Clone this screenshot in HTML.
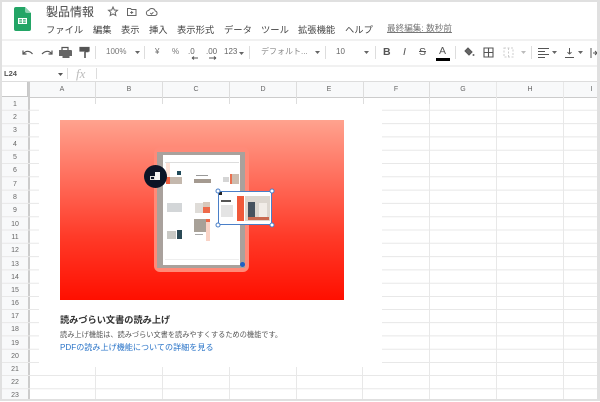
<!DOCTYPE html>
<html lang="ja">
<head>
<meta charset="utf-8">
<title>製品情報</title>
<style>
html,body{margin:0;padding:0;background:#fff}
body{width:600px;height:401px;overflow:hidden;position:relative;font-family:"Liberation Sans","Noto Sans CJK JP",sans-serif;color:#444}
.a{position:absolute;white-space:nowrap}
svg.a{overflow:visible}
#wrap{position:absolute;left:0;top:0;width:600px;height:401px;filter:blur(.35px)}
.m{top:23px;font-size:9.3px;line-height:14px;color:#444}
.t{font-size:8px;line-height:10px;color:#666;top:47px}
.h{top:85px;font-size:7px;line-height:10px;color:#666;width:20px;text-align:center}
.r{left:2px;width:26px;text-align:center;font-size:7px;line-height:13px;color:#666}
.sep{position:absolute;width:1px;height:13px;top:46px;background:#ddd}
.b{position:absolute}
</style>
</head>
<body>
<div id="wrap">
<!-- logo -->
<svg class="a" style="left:14px;top:7px" width="17" height="24" viewBox="0 0 17 24">
<path d="M2 0H11L17 6V22a2 2 0 0 1-2 2H2a2 2 0 0 1-2-2V2a2 2 0 0 1 2-2z" fill="#23a566"/>
<path d="M11 0L17 6H13a2 2 0 0 1-2-2z" fill="#8ed1b1"/>
<path d="M4 11H13V17H4z" fill="#fff"/>
<path d="M5.200 12.200H8V13.500H5.200zM9 12.200H11.800V13.500H9zM5.200 14.500H8V15.800H5.200zM9 14.500H11.800V15.800H9z" fill="#23a566"/>
</svg>
<div class="a" style="left:46px;top:3px;font-size:12px;line-height:18px;color:#444">製品情報</div>
<svg class="a" style="left:107px;top:5px" width="54" height="14" viewBox="0 0 54 14" fill="none" stroke="#666" stroke-width="1">
<path d="M6 2l1.300 3 3.200.3-2.400 2.100.7 3.100L6 8.900l-2.800 1.600.7-3.100L1.500 5.300 4.700 5z"/>
<path d="M20.500 3.500h3l1 1h4.500v6h-8.500z"/><path d="M24.700 6v3M23.200 7.500h3"/>
<path d="M42 10.500a2.500 2.500 0 0 1-.3-5 3.500 3.500 0 0 1 6.500.5 2.300 2.300 0 0 1 0 4.500z"/><path d="M43.300 8l1.200 1.200 1.900-2"/>
</svg>
<div class="a m" style="left:46px">ファイル</div>
<div class="a m" style="left:93px">編集</div>
<div class="a m" style="left:121px">表示</div>
<div class="a m" style="left:149px">挿入</div>
<div class="a m" style="left:177px">表示形式</div>
<div class="a m" style="left:224px">データ</div>
<div class="a m" style="left:261px">ツール</div>
<div class="a m" style="left:298px">拡張機能</div>
<div class="a m" style="left:345px">ヘルプ</div>
<div class="a" style="left:387px;top:22px;font-size:8.600px;line-height:13px;color:#777;text-decoration:underline">最終編集: 数秒前</div>

<!-- toolbar bands -->
<div class="a" style="left:2px;top:39px;width:595px;height:2px;background:#f1f1f1"></div>
<div class="a" style="left:2px;top:65px;width:595px;height:2px;background:#f1f1f1"></div>
<div class="a" style="left:2px;top:81px;width:595px;height:1px;background:#ddd"></div>

<!-- toolbar icons left -->
<svg class="a" style="left:20px;top:45px" width="72" height="15" viewBox="0 0 72 15" fill="none" stroke="#555" stroke-width="1.200">
<path d="M3 5.500v3.500h3.500M3.500 8.500C6 5.500 9.500 5.500 12.500 9"/>
<path d="M32 5.500v3.500h-3.500M31.500 8.500C29 5.500 25.500 5.500 22 9"/>
<path d="M39 5h12a1 1 0 0 1 1 1v5h-2.500v2h-7v-2H39z" fill="#666" stroke="none"/>
<path d="M42 5V2.500h6V5"/>
<path d="M60 2.500h9v3.500h-9z" fill="#555"/><path d="M64.500 6.500h4M65 7v6" stroke-width="1.600"/>
</svg>
<div class="sep" style="left:95px"></div>
<div class="a t" style="left:106px;color:#777">100%</div>
<svg class="a" style="left:135px;top:51px" width="5" height="3"><path d="M0 0h5L2.500 3z" fill="#666"/></svg>
<div class="sep" style="left:144px"></div>
<div class="a t" style="left:155px">¥</div>
<div class="a t" style="left:172px;color:#777">%</div>
<div class="a t" style="left:188px">.0</div>
<svg class="a" style="left:191px;top:56px" width="8" height="4"><path d="M1 2h6M1 2l2-1.500M1 2l2 1.500" stroke="#555" fill="none"/></svg>
<div class="a t" style="left:206px">.00</div>
<svg class="a" style="left:208px;top:56px" width="10" height="4"><path d="M1 2h7M8 2L6 .5M8 2L6 3.500" stroke="#555" fill="none"/></svg>
<div class="a t" style="left:224px">123</div>
<svg class="a" style="left:239px;top:52px" width="5" height="3"><path d="M0 0h5L2.500 3z" fill="#666"/></svg>
<div class="sep" style="left:249px"></div>
<div class="a t" style="left:261px;color:#888">デフォルト...</div>
<svg class="a" style="left:315px;top:51px" width="5" height="3"><path d="M0 0h5L2.500 3z" fill="#666"/></svg>
<div class="sep" style="left:325px"></div>
<div class="a t" style="left:336px">10</div>
<svg class="a" style="left:364px;top:51px" width="5" height="3"><path d="M0 0h5L2.500 3z" fill="#666"/></svg>
<div class="sep" style="left:375px"></div>
<div class="a" style="left:383px;top:46px;font-size:10.500px;line-height:13px;font-weight:bold;color:#555">B</div>
<div class="a" style="left:403px;top:46px;font-size:10.500px;line-height:13px;font-style:italic;color:#555">I</div>
<div class="a" style="left:419px;top:46px;font-size:10.500px;line-height:13px;color:#555;text-decoration:line-through">S</div>
<div class="a" style="left:439px;top:45px;font-size:10.500px;line-height:13px;color:#555">A</div>
<div class="a" style="left:436px;top:58px;width:14px;height:3px;background:#000"></div>
<div class="sep" style="left:455px"></div>
<svg class="a" style="left:463px;top:46px" width="60" height="13" viewBox="0 0 60 13" fill="none" stroke="#555">
<path d="M5 2l4 4-3 3-4-4z" fill="#666"/><circle cx="10.500" cy="9" r="1" fill="#666" stroke="none"/>
<path d="M21 2h9v9h-9zM25.500 2v9M21 6.500h9" stroke-width="1.100"/>
<path d="M41 2h9v9h-9zM45.500 2v9" stroke="#ccc" stroke-dasharray="2 1.500"/>
</svg>
<svg class="a" style="left:521px;top:51px" width="5" height="3"><path d="M0 0h5L2.500 3z" fill="#bbb"/></svg>
<div class="sep" style="left:531px"></div>
<svg class="a" style="left:538px;top:46px" width="60" height="14" viewBox="0 0 60 14" fill="none" stroke="#555" stroke-width="1">
<path d="M0 2.500h11M0 5.500h7M0 8.500h11M0 11.500h7"/>
<path d="M31.500 2v6M29.500 6.200L31.500 8l2-1.800M27 11.500h9"/>
<path d="M53 2v10M55 7h4M57 5l2 2-2 2"/>
</svg>
<svg class="a" style="left:552px;top:51px" width="5" height="3"><path d="M0 0h5L2.500 3z" fill="#666"/></svg>
<svg class="a" style="left:578px;top:51px" width="5" height="3"><path d="M0 0h5L2.500 3z" fill="#666"/></svg>

<!-- formula bar -->
<div class="a" style="left:4px;top:69px;font-size:7.500px;line-height:10px;font-weight:bold;color:#555">L24</div>
<svg class="a" style="left:58px;top:73px" width="5" height="3"><path d="M0 0h5L2.500 3z" fill="#555"/></svg>
<div class="a" style="left:67px;top:68px;width:1px;height:11px;background:#ddd"></div>
<div class="a" style="left:76px;top:66px;font-size:13px;line-height:15px;font-style:italic;font-family:'Liberation Serif',serif;color:#bbb">fx</div>
<div class="a" style="left:96px;top:68px;width:1px;height:11px;background:#ddd"></div>

<!-- column header -->
<div class="a" style="left:2px;top:82px;width:595px;height:15px;background:#f8f9fa"></div>
<div class="a" style="left:2px;top:82px;width:25px;height:14px;background:#fff;border-right:2px solid #c8c8c8;border-bottom:2px solid #c8c8c8"></div>
<div class="a" style="left:29px;top:97px;width:568px;height:1px;background:#ccc"></div>
<div class="a" style="left:95px;top:82px;width:1px;height:22px;background:#ddd"></div>
<div class="a" style="left:162px;top:82px;width:1px;height:22px;background:#ddd"></div>
<div class="a" style="left:229px;top:82px;width:1px;height:22px;background:#ddd"></div>
<div class="a" style="left:296px;top:82px;width:1px;height:22px;background:#ddd"></div>
<div class="a" style="left:363px;top:82px;width:1px;height:22px;background:#ddd"></div>
<div class="a" style="left:429px;top:82px;width:1px;height:22px;background:#ddd"></div>
<div class="a" style="left:496px;top:82px;width:1px;height:319px;background:#e8e8e8"></div>
<div class="a" style="left:563px;top:82px;width:1px;height:319px;background:#e8e8e8"></div>
<div class="a h" style="left:52px">A</div>
<div class="a h" style="left:119px">B</div>
<div class="a h" style="left:186px">C</div>
<div class="a h" style="left:253px">D</div>
<div class="a h" style="left:319px">E</div>
<div class="a h" style="left:386px">F</div>
<div class="a h" style="left:453px">G</div>
<div class="a h" style="left:520px">H</div>
<div class="a h" style="left:586px;width:11px;overflow:hidden">I</div>

<!-- row header + grid -->
<div class="a" style="left:2px;top:97px;width:26px;height:304px;background:#f8f9fa"></div>
<div class="a" style="left:28px;top:82px;width:2px;height:319px;background:#ccc"></div>
<svg class="a" style="left:0;top:0" width="600" height="401">
<path d="M2 110.300H597M2 123.600H597M2 136.900H597M2 150.200H597M2 163.500H597M2 176.800H597M2 190.100H597M2 203.400H597M2 216.700H597M2 230H597M2 243.300H597M2 256.600H597M2 269.900H597M2 283.200H597M2 296.500H597M2 309.500H597M2 322.600H597M2 335.900H597M2 349.200H597M2 362.500H597M2 375.500H597M2 388.800H597" stroke="#e8e8e8" stroke-width="1" fill="none"/>
</svg>
<div class="a" style="left:39px;top:104px;width:343px;height:263px;background:#fff"></div>
<div class="a" style="left:95px;top:367px;width:1px;height:34px;background:#e8e8e8"></div>
<div class="a" style="left:162px;top:367px;width:1px;height:34px;background:#e8e8e8"></div>
<div class="a" style="left:229px;top:367px;width:1px;height:34px;background:#e8e8e8"></div>
<div class="a" style="left:296px;top:367px;width:1px;height:34px;background:#e8e8e8"></div>
<div class="a" style="left:362px;top:367px;width:1px;height:34px;background:#e8e8e8"></div>
<div class="a" style="left:429px;top:104px;width:1px;height:297px;background:#e8e8e8"></div>

<div class="a r" style="top:98px">1</div><div class="a r" style="top:111px">2</div><div class="a r" style="top:124px">3</div><div class="a r" style="top:138px">4</div><div class="a r" style="top:151px">5</div><div class="a r" style="top:164px">6</div><div class="a r" style="top:178px">7</div><div class="a r" style="top:191px">8</div><div class="a r" style="top:204px">9</div><div class="a r" style="top:218px">10</div><div class="a r" style="top:231px">11</div><div class="a r" style="top:244px">12</div><div class="a r" style="top:258px">13</div><div class="a r" style="top:271px">14</div><div class="a r" style="top:284px">15</div><div class="a r" style="top:297px">16</div><div class="a r" style="top:310px">17</div><div class="a r" style="top:323px">18</div><div class="a r" style="top:337px">19</div><div class="a r" style="top:350px">20</div><div class="a r" style="top:363px">21</div><div class="a r" style="top:376px">22</div><div class="a r" style="top:389px">23</div>

<!-- hero image -->
<div class="a" style="left:60px;top:120px;width:284px;height:180px;background:linear-gradient(#ffa28e,#ff6a58 35%,#ff3a28 65%,#ff0f00)"></div>
<div class="b" style="left:154px;top:147px;width:95px;height:125px;border-radius:6px;background:#ff8a78"></div>
<div class="b" style="left:157px;top:152px;width:88px;height:116px;background:#a9a19c"></div>
<div class="b" style="left:163px;top:155px;width:77px;height:110px;background:#fff"></div>
<div class="b" style="left:165px;top:162px;width:74px;height:1px;background:#ddd"></div>
<div class="b" style="left:165px;top:259px;width:74px;height:1px;background:#eee"></div>
<!-- thumb 1 -->
<div class="b" style="left:166px;top:163px;width:4px;height:14px;background:#ffe3d8"></div>
<div class="b" style="left:166px;top:177px;width:4px;height:7px;background:#f06040"></div>
<div class="b" style="left:170px;top:177px;width:12px;height:7px;background:#c4b8ad"></div>
<div class="b" style="left:177px;top:171px;width:4px;height:4px;background:#1f4a5a"></div>
<!-- thumb 2 -->
<div class="b" style="left:196px;top:175px;width:12px;height:1px;background:#999"></div>
<div class="b" style="left:194px;top:179px;width:17px;height:4px;background:#a49a90"></div>
<!-- thumb 3 -->
<div class="b" style="left:223px;top:177px;width:6px;height:5px;background:#d5d5d5"></div>
<div class="b" style="left:230px;top:174px;width:9px;height:10px;background:#cdbcae"></div>
<div class="b" style="left:230px;top:174px;width:2px;height:10px;background:#ea7050"></div>
<!-- thumb 4 -->
<div class="b" style="left:167px;top:203px;width:15px;height:9px;background:#d3d6d8"></div>
<!-- thumb 5 -->
<div class="b" style="left:195px;top:203px;width:8px;height:10px;background:#dfdcd8"></div>
<div class="b" style="left:203px;top:202px;width:7px;height:5px;background:#d8c8bb"></div>
<div class="b" style="left:203px;top:207px;width:7px;height:6px;background:#ee6a4a"></div>
<!-- thumb 6 -->
<div class="b" style="left:194px;top:219px;width:12px;height:13px;background:#a8a198"></div>
<div class="b" style="left:206px;top:219px;width:4px;height:3px;background:#ee6a4a"></div>
<div class="b" style="left:206px;top:222px;width:4px;height:19px;background:#f9d3c6"></div>
<div class="b" style="left:195px;top:234px;width:8px;height:1px;background:#aaa"></div>
<!-- thumb 7 -->
<div class="b" style="left:167px;top:231px;width:9px;height:8px;background:#c9c9c5"></div>
<div class="b" style="left:177px;top:230px;width:5px;height:9px;background:#2b4a56"></div>
<div class="b" style="left:240px;top:262px;width:5px;height:5px;border-radius:50%;background:#1f5fc4"></div>
<!-- black badge -->
<div class="b" style="left:144px;top:165px;width:23px;height:23px;border-radius:50%;background:#0c1426"></div>
<div class="b" style="left:150px;top:176px;width:5px;height:4px;border:1px solid #ddd;box-sizing:border-box"></div>
<div class="b" style="left:155px;top:172px;width:5px;height:8px;background:#f4f4f4"></div>
<!-- floating doc -->
<div class="b" style="left:218px;top:191px;width:54px;height:34px;background:#fff;border:1px solid #4a7fc8;box-sizing:border-box"></div>
<div class="b" style="left:237px;top:196px;width:7px;height:25px;background:#f0593a"></div>
<div class="b" style="left:245px;top:196px;width:25px;height:25px;background:#dcd6cf"></div>
<div class="b" style="left:248px;top:202px;width:7px;height:17px;background:#47525e"></div>
<div class="b" style="left:259px;top:203px;width:8px;height:16px;background:#f1ece7"></div>
<div class="b" style="left:248px;top:217px;width:21px;height:3px;background:#c9694f"></div>
<div class="b" style="left:221px;top:200px;width:10px;height:1.500px;background:#555"></div>
<div class="b" style="left:221px;top:205px;width:12px;height:12px;background:#e4e4e4"></div>
<div class="b" style="left:219px;top:192px;width:3px;height:3px;background:#222"></div>
<svg class="a" style="left:215px;top:188px" width="60" height="40" fill="#fff" stroke="#4a7fc8" stroke-width="1">
<circle cx="3" cy="3" r="2"/><circle cx="57" cy="3" r="2"/><circle cx="3" cy="37" r="2"/><circle cx="57" cy="37" r="2"/>
</svg>

<!-- text -->
<div class="a" style="left:60px;top:314px;font-size:9.200px;line-height:13px;font-weight:bold;color:#333">読みづらい文書の読み上げ</div>
<div class="a" style="left:60px;top:329px;font-size:7.200px;line-height:11px;color:#555">読み上げ機能は、読みづらい文書を読みやすくするための機能です。</div>
<div class="a" style="left:60px;top:342px;font-size:8.100px;line-height:12px;color:#2a74c8">PDFの読み上げ機能についての詳細を見る</div>

<!-- outer frame -->
<div class="a" style="left:0;top:0;width:600px;height:2px;background:#e0e0e0"></div>
<div class="a" style="left:0;top:399px;width:600px;height:2px;background:#e0e0e0"></div>
<div class="a" style="left:0;top:0;width:2px;height:401px;background:#e0e0e0"></div>
<div class="a" style="left:597px;top:0;width:3px;height:401px;background:#e0e0e0"></div>
</div>
</body>
</html>
